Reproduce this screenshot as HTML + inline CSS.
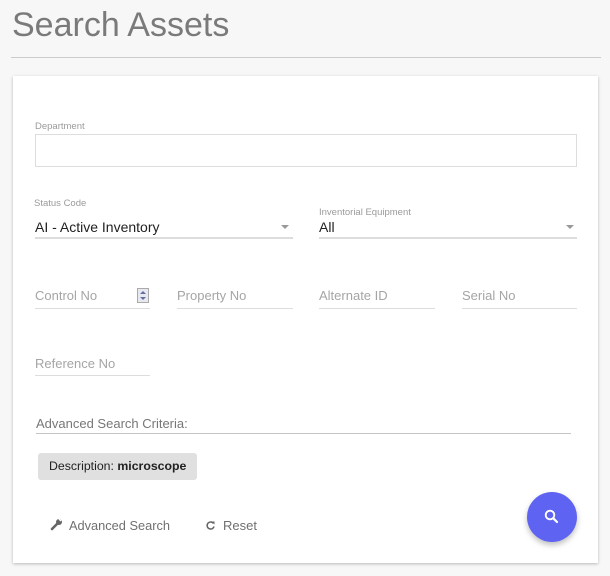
<!DOCTYPE html>
<html><head><style>
*{margin:0;padding:0;box-sizing:border-box}
body{width:610px;height:576px;background:#f7f7f7;font-family:"Liberation Sans",sans-serif;position:relative;overflow:hidden}
.a{position:absolute;white-space:nowrap}
.lbl{font-size:9.5px;color:#9a9a9a}
.ph{font-size:13px;color:#a5a5a5}
.ul{position:absolute;height:1px;background:#ddd}
</style></head><body>
<div class="a" style="left:12px;top:6px;font-size:34px;color:#7a7a7a;">Search Assets</div>
<div class="ul" style="left:11px;top:57px;width:590px;background:#ccc"></div>
<div class="a" style="left:13px;top:76px;width:585px;height:487px;background:#fff;box-shadow:0 1px 3px rgba(0,0,0,.25)"></div>

<div class="a lbl" style="left:35px;top:121px">Department</div>
<div class="a" style="left:35px;top:134px;width:542px;height:33px;border:1px solid #ddd"></div>

<div class="a lbl" style="left:34px;top:198px">Status Code</div>
<div class="a" style="left:35px;top:219px;font-size:14px;color:#222">AI - Active Inventory</div>
<div class="ul" style="left:35px;top:237px;width:258px;height:2px"></div>
<div class="a" style="left:281px;top:225px;border-left:4px solid transparent;border-right:4px solid transparent;border-top:4px solid #999"></div>

<div class="a lbl" style="left:319px;top:207px">Inventorial Equipment</div>
<div class="a" style="left:319px;top:219px;font-size:14px;color:#222">All</div>
<div class="ul" style="left:319px;top:237px;width:258px;height:2px"></div>
<div class="a" style="left:566px;top:225px;border-left:4px solid transparent;border-right:4px solid transparent;border-top:4px solid #999"></div>

<div class="a ph" style="left:35px;top:288px">Control No</div>
<div class="a" style="left:137px;top:288px;width:12px;height:15px;border:1px solid #aaa;background:#e8e8f0"><div style="position:absolute;left:2px;top:2px;border-left:3px solid transparent;border-right:3px solid transparent;border-bottom:3px solid #6070a0"></div><div style="position:absolute;left:2px;top:8px;border-left:3px solid transparent;border-right:3px solid transparent;border-top:3px solid #6070a0"></div></div>
<div class="ul" style="left:35px;top:308px;width:115px"></div>
<div class="a ph" style="left:177px;top:288px">Property No</div>
<div class="ul" style="left:177px;top:308px;width:116px"></div>
<div class="a ph" style="left:319px;top:288px">Alternate ID</div>
<div class="ul" style="left:319px;top:308px;width:116px"></div>
<div class="a ph" style="left:462px;top:288px">Serial No</div>
<div class="ul" style="left:462px;top:308px;width:115px"></div>

<div class="a ph" style="left:35px;top:356px">Reference No</div>
<div class="ul" style="left:35px;top:375px;width:115px"></div>

<div class="a" style="left:36px;top:416px;font-size:13px;color:#777">Advanced Search Criteria:</div>
<div class="ul" style="left:36px;top:433px;width:535px;background:#c4c4c4"></div>

<div class="a" style="left:38px;top:453px;width:159px;height:27px;background:#e0e0e0;border-radius:3px;font-size:12.3px;color:#222;line-height:27px;padding-left:11px">Description: <b>microscope</b></div>

<svg class="a" style="left:50px;top:518px" width="14" height="13" viewBox="0 0 14 13"><path d="M2 11 L7 6" stroke="#666" stroke-width="2.6" stroke-linecap="round"/><circle cx="9" cy="4" r="3" fill="#666"/><path d="M9 1 L11 3" stroke="#fff" stroke-width="1.5"/></svg>
<div class="a" style="left:69px;top:518px;font-size:12.8px;color:#707070">Advanced Search</div>
<svg class="a" style="left:205px;top:520px" width="11" height="11" viewBox="0 0 11 11"><path d="M8.5 3.5 A3.5 3.5 0 1 0 9 6.5" fill="none" stroke="#666" stroke-width="1.5"/><path d="M6.5 1.5 L9.5 1.5 L9.5 4.5 Z" fill="#666"/></svg>
<div class="a" style="left:223px;top:518px;font-size:13px;color:#707070">Reset</div>

<div class="a" style="left:527px;top:492px;width:50px;height:50px;border-radius:50%;background:#5f63f1;box-shadow:0 3px 6px rgba(0,0,0,.25)"></div>
<svg class="a" style="left:542px;top:507px" width="20" height="20" viewBox="0 0 20 20"><circle cx="8" cy="8" r="4.3" fill="none" stroke="#fff" stroke-width="1.9"/><path d="M11.2 11.2 L15 15" stroke="#fff" stroke-width="2.2" stroke-linecap="round"/></svg>
</body></html>
